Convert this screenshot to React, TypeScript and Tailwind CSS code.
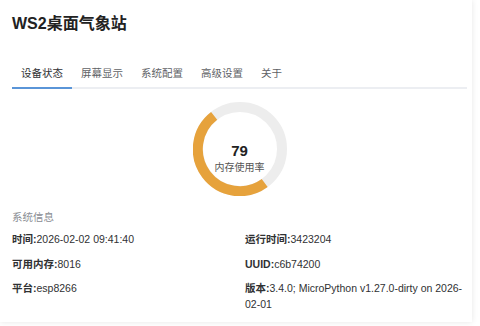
import React from "react";

const tabs = ["设备状态", "屏幕显示", "系统配置", "高级设置", "关于"];

const Gauge = () => {
  // arc drawn over a full grey track, matching the lower-left half
  return (
    <div className="relative w-[94px] h-[94px]">
      <svg width="94" height="94" viewBox="0 0 94 94">
        <circle cx="47" cy="47" r="42" fill="none" stroke="#ededed" strokeWidth="10" />
        <path
          d="M21.14 13.9 A42 42 0 0 0 71.69 80.98"
          fill="none"
          stroke="#e6a23c"
          strokeWidth="10"
        />
      </svg>
      <div className="absolute inset-0 flex flex-col items-center pt-[41px]">
        <span className="text-[15px] leading-[16px] font-semibold text-[#222]">79</span>
        <span className="mt-[2px] text-[10px] leading-[14px] text-[#555]">内存使用率</span>
      </div>
    </div>
  );
};

const Row = ({ label, value }: { label: string; value: string }) => (
  <div className="text-[10.5px] leading-[16px] text-[#303133]">
    <span className="font-semibold">{label}:</span>
    {value}
  </div>
);

export default function App() {
  return (
    <div
      className="w-[480px] h-[326px] bg-white overflow-hidden"
      style={{ fontFamily: '"Liberation Sans", "Noto Sans CJK SC", sans-serif' }}
    >
      <div className="w-[472px] h-[322px] bg-white shadow-[0_0_6px_rgba(0,0,0,0.10)] pl-[12px] pt-[14px]">
        <h1 className="text-[16px] leading-[20px] font-semibold text-[#222]">WS2桌面气象站</h1>

        <div className="mt-[27px] w-[455px] flex border-b-2 border-[#eceef2]">
          {tabs.map((t, i) => (
            <div
              key={t}
              className={
                i === 0
                  ? "h-[28px] px-[9px] -mb-[2px] flex items-center border-b-2 border-[#5a95d8] text-[10.5px] text-[#303133]"
                  : "h-[28px] px-[9px] -mb-[2px] flex items-center border-b-2 border-transparent text-[10.5px] text-[#606266]"
              }
            >
              {t}
            </div>
          ))}
        </div>

        <div className="w-[455px] mt-[13px] flex justify-center">
          <Gauge />
        </div>

        <div className="mt-[13px] text-[10.5px] leading-[16px] text-[#8a8d93]">系统信息</div>

        <div className="mt-[6px] grid grid-cols-[233px_222px] gap-y-[8.5px]">
          <Row label="时间" value="2026-02-02 09:41:40" />
          <Row label="运行时间" value="3423204" />
          <Row label="可用内存" value="8016" />
          <Row label="UUID" value="c6b74200" />
          <Row label="平台" value="esp8266" />
          <Row label="版本" value={"3.4.0; MicroPython v1.27.0-dirty on 2026-\u200B02-01"} />
        </div>
      </div>
    </div>
  );
}
